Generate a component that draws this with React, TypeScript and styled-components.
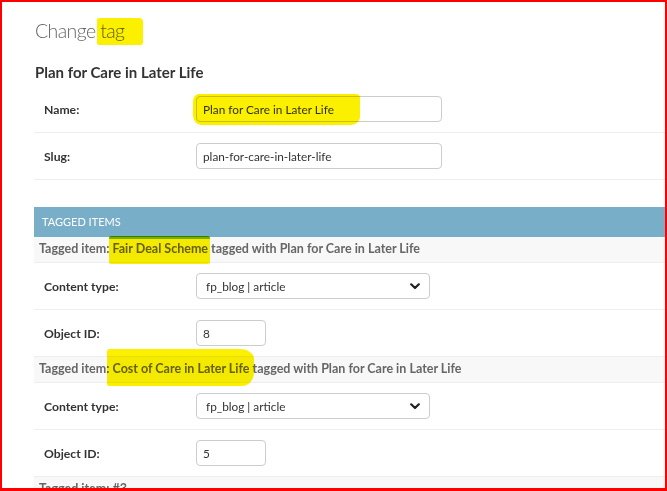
import React from 'react';
import styled, { createGlobalStyle, css } from 'styled-components';

const GlobalStyle = createGlobalStyle`
  html, body {
    margin: 0;
    padding: 0;
    background: #fff;
  }
  body {
    font-family: Lato, "Liberation Sans", sans-serif;
    color: #333;
  }
`;

interface MarkerProps {
  $top?: number;
  $bottom?: number;
  $left?: number;
  $right?: number;
  $radius?: string;
  $green?: boolean;
}

const Frame = styled.div`
  box-sizing: border-box;
  width: 667px;
  height: 491px;
  border: 2px solid #ff0000;
  border-bottom-width: 3px;
  overflow: hidden;
  background: #fff;
`;

const Content = styled.div`
  padding: 13px 0 0 32px;
  width: 700px;
`;

const Title = styled.h1`
  margin: 0 0 15px 1px;
  font-size: 19.5px;
  letter-spacing: -0.6px;
  font-weight: 300;
  color: #666;
  line-height: 32px;
`;

const Heading = styled.h2`
  margin: 0 0 4px 1px;
  font-size: 15px;
  font-weight: 700;
  color: #333;
  line-height: 20px;
`;

const Fieldset = styled.div`
  margin-bottom: 27px;
`;

const Row = styled.div`
  display: flex;
  align-items: center;
  padding: 10px 10px;
  border-bottom: 1px solid #eee;
`;

const Label = styled.label`
  width: 152px;
  font-weight: 700;
  color: #333;
  font-size: 12.2px;
`;

const fieldBox = css`
  box-sizing: border-box;
  height: 26px;
  border: 1px solid #ccc;
  border-radius: 4px;
  padding: 0 6px;
  display: flex;
  align-items: center;
  font-size: 11.8px;
  color: #333;
  background: #fff;
`;

const TextInput = styled.div<{ $width: number }>`
  ${fieldBox};
  width: ${(p) => p.$width}px;
`;

const Select = styled.div`
  ${fieldBox};
  width: 234px;
  justify-content: space-between;
  padding: 0 9px 0 9px;
`;

const InlineHeader = styled.div`
  background: #79aec8;
  color: #fff;
  font-size: 11px;
  text-transform: uppercase;
  padding: 8px 8px;
  line-height: 14px;
`;

const ItemBar = styled.div`
  background: #f8f8f8;
  border-bottom: 1px solid #eee;
  color: #666;
  font-size: 12.5px;
  font-weight: 700;
  padding: 4px 5px 5px;
  line-height: 16px;
`;

const Marker = styled.span<MarkerProps>`
  position: relative;
  &::before {
    content: '';
    position: absolute;
    top: ${(p) => p.$top ?? 0}px;
    bottom: ${(p) => p.$bottom ?? 0}px;
    left: ${(p) => p.$left ?? 0}px;
    right: ${(p) => p.$right ?? 0}px;
    background: #fbf000;
    border-radius: ${(p) => p.$radius ?? '3px'};
    mix-blend-mode: multiply;
    z-index: 2;
    pointer-events: none;
    ${(p) =>
      p.$green &&
      css`
        border-top: 3px solid #7cb400;
      `}
  }
`;

const Chevron = () => (
  <svg width="10" height="7" viewBox="0 0 10 7">
    <path d="M1.2 1.3 L5 5 L8.8 1.3" fill="none" stroke="#222" strokeWidth="2.2" strokeLinecap="round" strokeLinejoin="round" />
  </svg>
);

const TaggedItem: React.FC<{ title: React.ReactNode; objectId: string }> = ({ title, objectId }) => (
  <>
    <ItemBar>
      Tagged item: {title} tagged with Plan for Care in Later Life
    </ItemBar>
    <Row>
      <Label>Content type:</Label>
      <Select>
        <span>fp_blog | article</span>
        <Chevron />
      </Select>
    </Row>
    <Row>
      <Label>Object ID:</Label>
      <TextInput $width={70}>{objectId}</TextInput>
    </Row>
  </>
);

export default function App() {
  return (
    <Frame>
      <GlobalStyle />
      <Content>
        <Title>
          Change{' '}
          <Marker $top={-1} $bottom={-3} $left={-3} $right={-19} $radius="2px 4px 3px 2px">
            tag
          </Marker>
        </Title>
        <Heading>Plan for Care in Later Life</Heading>
        <Fieldset>
          <Row>
            <Label>Name:</Label>
            <TextInput $width={246}>
              <Marker $top={-8} $bottom={-8} $left={-10} $right={-26} $radius="6px 4px 10px 8px / 8px 4px 8px 10px">
                Plan for Care in Later Life
              </Marker>
            </TextInput>
          </Row>
          <Row>
            <Label>Slug:</Label>
            <TextInput $width={246}>plan-for-care-in-later-life</TextInput>
          </Row>
        </Fieldset>
        <InlineHeader>Tagged items</InlineHeader>
        <TaggedItem
          title={
            <Marker $top={-5} $bottom={-8} $left={-4} $right={-2} $radius="2px" $green>
              Fair Deal Scheme
            </Marker>
          }
          objectId="8"
        />
        <TaggedItem
          title={
            <Marker $top={-12} $bottom={-10} $left={-6} $right={-4} $radius="2px 14px 12px 2px / 4px 10px 14px 2px">
              Cost of Care in Later Life
            </Marker>
          }
          objectId="5"
        />
        <ItemBar>Tagged item: #3</ItemBar>
      </Content>
    </Frame>
  );
}
